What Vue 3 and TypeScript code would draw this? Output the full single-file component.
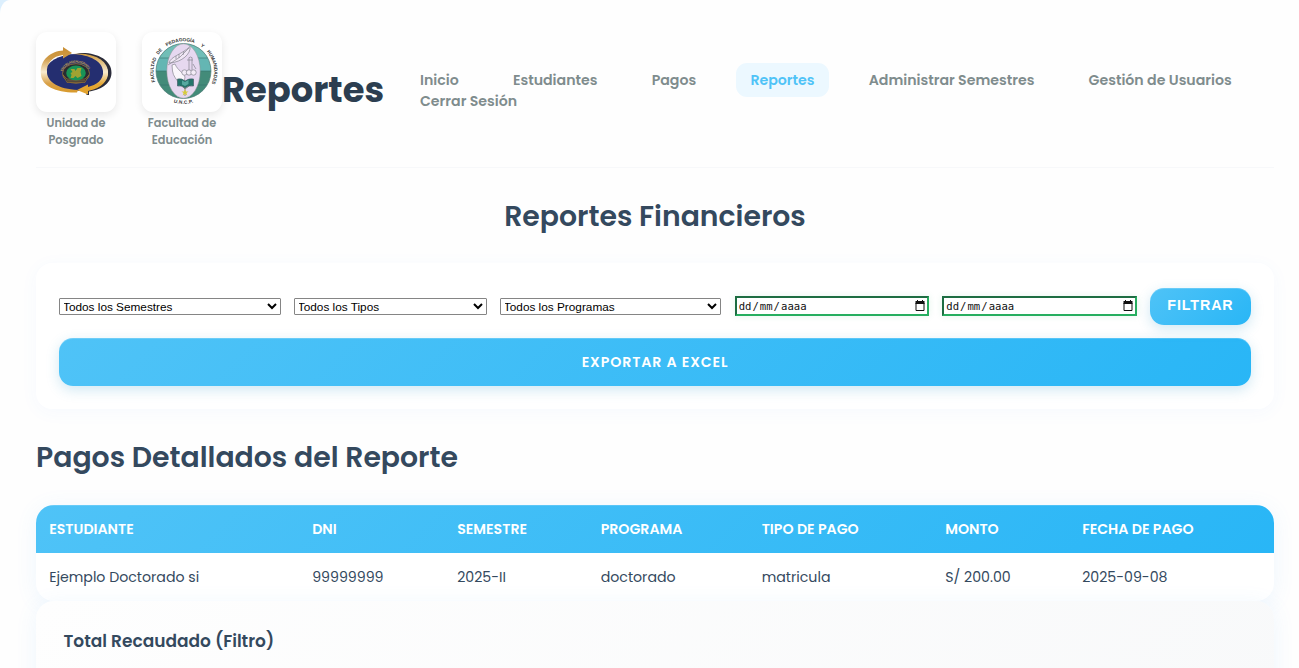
<script setup lang="ts">
interface Payment {
  student: string
  dni: string
  term: string
  program: string
  kind: string
  amount: string
  date: string
}

const mainLinks: { label: string; active?: boolean }[] = [
  { label: 'Inicio' },
  { label: 'Estudiantes' },
  { label: 'Pagos' },
  { label: 'Reportes', active: true },
  { label: 'Administrar Semestres' },
  { label: 'Gestión de Usuarios' },
]
const columns: string[] = ['Estudiante', 'DNI', 'Semestre', 'Programa', 'Tipo de Pago', 'Monto', 'Fecha de Pago']
const payments: Payment[] = [
  {
    student: 'Ejemplo Doctorado si',
    dni: '99999999',
    term: '2025-II',
    program: 'doctorado',
    kind: 'matricula',
    amount: 'S/ 200.00',
    date: '2025-09-08',
  },
]
// Words around the faculty seal: start along the ring and length.
const ringWords: { text: string; at: number; len: number }[] = [
  { text: 'FACULTAD', at: 2, len: 24 },
  { text: 'DE', at: 30, len: 6 },
  { text: 'PEDAGOGÍA', at: 41.5, len: 29 },
  { text: 'Y', at: 77, len: 3.4 },
  { text: 'HUMANIDADES', at: 85.5, len: 34 },
]
</script>

<template>
  <div class="page">
    <header class="top">
      <div class="logos">
        <figure class="logo">
          <div class="logo-box">
            <svg width="80" height="80" viewBox="0 0 80 80">
              <defs>
                <linearGradient id="gold-l" x1="0" y1="0" x2="0" y2="1">
                  <stop offset="0" stop-color="#c98f33" />
                  <stop offset=".25" stop-color="#cf9a45" />
                  <stop offset=".55" stop-color="#f7ead0" />
                  <stop offset=".8" stop-color="#d9a148" />
                  <stop offset="1" stop-color="#d89a2c" />
                </linearGradient>
                <linearGradient id="gold-r" x1="0" y1="0" x2="0" y2="1">
                  <stop offset="0" stop-color="#d09a3c" />
                  <stop offset=".45" stop-color="#f7ead0" />
                  <stop offset=".75" stop-color="#e3a633" />
                  <stop offset="1" stop-color="#e3a22c" />
                </linearGradient>
                <path id="seal-arc" d="M26.500 39.500A14 12 0 0 1 53.500 39.500" />
              </defs>
              <path d="M40 21.500C58 19 76 27 75.500 41C75 53 63 58 53 59.500V63H50.500V58C62 56 71 50 72 41C72 30 56 22 40 21.500Z" fill="#2b2c3a" />
              <ellipse cx="40" cy="40.500" rx="31" ry="18.500" fill="#242e70" />
              <path d="M5 43C3 27 16 19 27 18.500V15L36 21L27 26.500V23C17 24 10 31 11 41C12 50 22 57 42 58L41 60.500C20 61 6 54 5 43Z" fill="url(#gold-l)" />
              <path d="M37 22C55 20 71 27 72 39C73 51 62 57 52 59V62.500L41 58L52 52.500V55C60 53 68 48 67 39C66 29 54 23 37 22Z" fill="url(#gold-r)" />
              <ellipse cx="40" cy="41.500" rx="13.500" ry="9.800" fill="#292b32" stroke="#9b7838" stroke-width=".8" />
              <path d="M27 43L31 50.500H49L53 43L49 47H31Z" fill="#3a3838" stroke="#a37934" stroke-width=".6" />
              <ellipse cx="40" cy="41" rx="9.800" ry="7.400" fill="#189356" />
              <path d="M34.500 37h4l1 2 2-3h4l-1 4 1 4-4 2-2-2-2 2h-3l1-3-1-2 2-1Z" fill="#b6a62c" opacity=".85" />
              <path d="M31.500 48.800h17" stroke="#a07940" stroke-width="1.200" stroke-dasharray="1 1" />
              <text class="seal-text"><textPath href="#seal-arc" textLength="32">ESCUELA DE POSGRADO</textPath></text>
            </svg>
          </div>
          <figcaption><span>Unidad de</span><span>Posgrado</span></figcaption>
        </figure>
        <figure class="logo">
          <div class="logo-box">
            <svg width="80" height="80" viewBox="0 0 80 80">
              <defs>
                <clipPath id="globe"><circle cx="41.500" cy="39" r="27.500" /></clipPath>
                <path id="ring" d="M14 51.500A30.300 30.300 0 1 1 69.700 51.500" />
                <path id="ring-low" d="M27 68.500A32.500 32.500 0 0 0 56 68.500" />
              </defs>
              <g clip-path="url(#globe)">
                <rect x="14" y="11" width="56" height="28" fill="#64b6b3" />
                <rect x="14" y="39" width="56" height="28" fill="#438b79" />
                <path d="M14 12H70V26H14Z" fill="#7cc5bc" opacity=".5" />
                <path d="M14 26H70M14 53H70M14 39H70" stroke="#32736c" stroke-width=".6" />
              </g>
              <circle cx="41.500" cy="39" r="27.500" fill="none" stroke="#527d78" stroke-width=".7" />
              <ellipse cx="41.500" cy="39" rx="16.700" ry="27.200" fill="#e6d8f0" stroke="#8a9290" stroke-width=".5" />
              <g fill="none" stroke="#85858f" stroke-width=".7">
                <path d="M27 31C29 24 39 23 48 14.500C49 22 40 30 28 31Z" fill="#f0e7f5" />
                <path d="M26 33L38 25L47 16M34 27v-3M37 26v-4M41 23l1-4" />
                <path d="M30 33L33 32C36 39 41 40 43 45L42 51H37C35 48 31 44 30.500 39Z" fill="#faf6fb" />
                <path d="M47 38V28Q46 25 48.500 25Q51 25 50 28V38M45 28h6M51 32l3 5" />
                <g fill="#f3ecf7">
                  <circle cx="42.500" cy="40.500" r="2.700" />
                  <circle cx="47" cy="40.500" r="2.700" />
                  <circle cx="51.500" cy="40.500" r="2.700" />
                </g>
              </g>
              <path d="M35.500 47Q40 46 43 49Q47 46 51.500 47V54Q47 53 43 56Q39 53 35.500 54Z" fill="#24756c" stroke="#3d5560" stroke-width=".6" />
              <path d="M40 48.500L43 50L46.500 48V52L43 54L40 52.500Z" fill="#56a8a0" />
              <path d="M40 54L43 57L47 54M43 56V64" stroke="#6c746b" fill="none" stroke-width=".7" />
              <path d="M43 57l1 2.400 2.500.1-2 1.500.8 2.500-2.300-1.500-2.300 1.500.8-2.500-2-1.500 2.500-.1Z" fill="#d7cb3a" />
              <text v-for="w in ringWords" :key="w.text" class="ring-text">
                <textPath href="#ring" :startOffset="w.at" :textLength="w.len" lengthAdjust="spacingAndGlyphs">{{ w.text }}</textPath>
              </text>
              <text class="ring-text"><textPath href="#ring-low" startOffset="5" textLength="20">U.N.C.P.</textPath></text>
            </svg>
          </div>
          <figcaption><span>Facultad de</span><span>Educación</span></figcaption>
        </figure>
      </div>
      <h1>Reportes</h1>
      <nav>
        <div class="links">
          <a v-for="link in mainLinks" :key="link.label" :class="{ active: link.active }">{{ link.label }}</a>
        </div>
        <div class="links"><a>Cerrar Sesión</a></div>
      </nav>
    </header>

    <main>
      <h2 class="main-title">Reportes Financieros</h2>

      <section class="filters">
        <div class="filter-row">
          <select class="s-term"><option>Todos los Semestres</option></select>
          <select class="s-kind"><option>Todos los Tipos</option></select>
          <select class="s-program"><option>Todos los Programas</option></select>
          <div v-for="n in 2" :key="n" class="date">
            <span class="mask"><i>dd</i>/<i>mm</i>/<i>aaaa</i></span>
            <svg width="10" height="12" viewBox="0 0 10 12">
              <path d="M1 3V10.500H9V3" fill="none" stroke="#111" />
              <path d="M.5 1H9.500V4H.5ZM2 0h1v1H2zM7 0h1v1H7z" fill="#111" />
            </svg>
          </div>
          <button class="btn filter-btn">FILTRAR</button>
        </div>
        <button class="btn export-btn">EXPORTAR A EXCEL</button>
      </section>

      <h2 class="sub-title">Pagos Detallados del Reporte</h2>

      <div class="table">
        <div class="row head">
          <span v-for="c in columns" :key="c">{{ c }}</span>
        </div>
        <div v-for="p in payments" :key="p.dni" class="row">
          <span>{{ p.student }}</span>
          <span>{{ p.dni }}</span>
          <span>{{ p.term }}</span>
          <span>{{ p.program }}</span>
          <span>{{ p.kind }}</span>
          <span>{{ p.amount }}</span>
          <span>{{ p.date }}</span>
        </div>
      </div>

      <section class="total"><h3>Total Recaudado (Filtro)</h3></section>
    </main>
  </div>
</template>

<style>
html,
body {
  height: 668px;
  overflow: hidden;
  background: #dceffd;
}
</style>

<style scoped>
.page {
  box-sizing: border-box;
  width: 1299px;
  height: 668px;
  overflow: hidden;
  padding: 0 25px 0 36px;
  border-radius: 10px 0 0 0 / 14px 0 0 0;
  background: #fefefe;
  font-family: Poppins, Inter, 'Open Sans', sans-serif;
  color: #34495e;
}
.top {
  box-sizing: border-box;
  display: flex;
  align-items: flex-start;
  height: 168px;
  padding-top: 32px;
  border-bottom: 1px solid #f7f8fa;
}
.logos {
  display: flex;
  gap: 26px;
}
.logo {
  width: 80px;
  margin: 0;
}
.logo-box {
  height: 80px;
  overflow: hidden;
  border-radius: 11px;
  background: #fff;
  box-shadow: 0 3px 9px rgba(0, 0, 0, 0.09);
}
.logo-box svg {
  display: block;
}
.seal-text {
  font: 700 3.3px 'Liberation Sans', sans-serif;
  fill: #b99b54;
}
.ring-text {
  font: 700 4.8px 'Liberation Sans', sans-serif;
  fill: #333;
}
.logo figcaption {
  display: flex;
  flex-direction: column;
  align-items: center;
  padding-top: 3px;
  font-size: 11.33px;
  font-weight: 600;
  line-height: 17px;
  color: #7f8c8d;
}
h1 {
  width: 198px;
  margin: 32px 0 0;
  font-size: 35.3px;
  font-weight: 700;
  line-height: 52px;
  color: #2c3e50;
}
nav {
  padding-top: 31px;
  font-size: 14.16px;
  font-weight: 600;
  line-height: 34px;
  color: #7f8c8d;
  white-space: nowrap;
}
.links {
  display: flex;
  height: 21px;
  gap: 54.2px;
}
.links a {
  height: 34px;
}
.links .active {
  margin: 0 -14.2px;
  padding: 0 14.2px;
  border-radius: 11px;
  background: #ecf8ff;
  color: #4fc3f7;
}
h2 {
  margin: 0;
  font-size: 28.3px;
  font-weight: 600;
  line-height: 44px;
}
.main-title {
  padding: 26px 0 25px;
  text-align: center;
}
.filters {
  box-sizing: border-box;
  height: 146px;
  padding: 25px 23px 0;
  border-radius: 16px;
  background: #fff;
  box-shadow: 0 3px 18px rgba(79, 150, 247, 0.045);
}
.filter-row {
  display: flex;
  align-items: center;
  justify-content: space-between;
  height: 37px;
}
select {
  box-sizing: border-box;
  height: 17px;
  margin: 0;
  padding: 0 0 1px;
  border: 1px solid #858585;
  border-radius: 1px;
  background-color: #fff;
  color: #000;
  font: 11.8px 'Liberation Sans', Arial, sans-serif;
  text-indent: -1px;
}
.s-term,
.s-program {
  width: 221.6px;
}
.s-kind {
  width: 192.8px;
}
.date {
  box-sizing: border-box;
  display: flex;
  align-items: center;
  justify-content: space-between;
  width: 194.4px;
  height: 20px;
  margin-bottom: 2px;
  padding: 0 2px 0 1px;
  border: 2px solid;
  border-color: #1d6d42 #27ae60 #27ae60 #1d6d42;
  background: #fff;
  box-shadow: 0 0 7px rgba(39, 174, 96, 0.12);
  color: #111;
}
.mask {
  font: 10.6px 'DejaVu Sans Mono', monospace;
}
.mask i {
  padding: 0 1px;
  font-style: normal;
}
.btn {
  display: block;
  margin: 0;
  padding: 0;
  border: 0;
  background: linear-gradient(135deg, #4fc3f7, #29b6f6);
  box-shadow: 0 4px 13px rgba(41, 150, 200, 0.22), inset 0 1px rgba(255, 255, 255, 0.18);
  color: #fff;
}
.filter-btn {
  width: 101px;
  height: 37px;
  padding-bottom: 3px;
  border-radius: 14px;
  font-family: 'Liberation Sans', Arial, sans-serif;
  font-size: 14.3px;
  font-weight: 700;
  letter-spacing: 0.885px;
}
.export-btn {
  width: 100%;
  height: 48px;
  margin-top: 13px;
  padding-top: 1px;
  border-radius: 14px;
  font-family: inherit;
  font-size: 14.16px;
  font-weight: 600;
  letter-spacing: 0.885px;
}
.sub-title {
  padding: 26px 0;
}
.table {
  overflow: hidden;
  height: 96px;
  border-radius: 18px;
  background: #fff;
  box-shadow: 0 3px 22px rgba(79, 170, 247, 0.09);
}
.row {
  display: grid;
  grid-template-columns: 263px 145px 143.5px 161px 183.5px 137px 1fr;
  padding-left: 13.2px;
  font-size: 14.16px;
  line-height: 48px;
  white-space: nowrap;
}
.row span {
  justify-self: start;
}
.head {
  box-sizing: border-box;
  height: 48px;
  background: linear-gradient(135deg, #4fc3f7, #29b6f6);
  box-shadow: inset 0 1px rgba(255, 255, 255, 0.15);
  color: #fff;
  font-weight: 600;
  text-transform: uppercase;
}
.total {
  box-sizing: border-box;
  height: 140px;
  padding: 25px 27.5px;
  border-radius: 18px;
  background: linear-gradient(135deg, #fefefe, #f8f9fa);
  box-shadow: 0 3px 22px rgba(79, 170, 247, 0.09);
}
h3 {
  margin: 0;
  font-size: 17px;
  font-weight: 600;
  line-height: 30px;
}
</style>
